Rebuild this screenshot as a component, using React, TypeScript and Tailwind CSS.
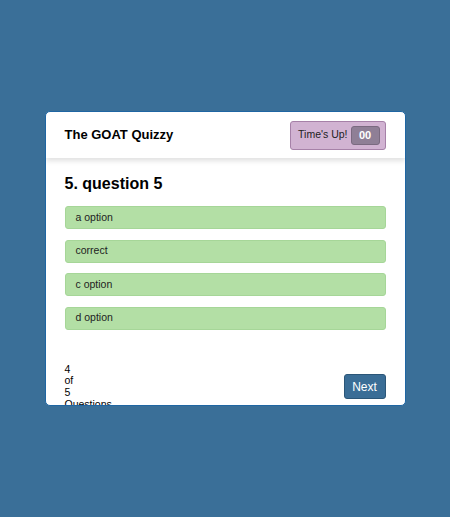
import React from "react";

export default function App() {
  const options = ["a option", "correct", "c option", "d option"];
  return (
    <div
      className="min-h-screen w-full bg-[#3a6f98] flex items-center justify-center"
      style={{ fontFamily: '"Liberation Sans", Arial, sans-serif' }}
    >
      <div className="w-[361px] h-[295px] bg-white border border-[#1f66a3] rounded-[5px] overflow-hidden flex flex-col">
        <div className="h-[46px] shrink-0 flex items-center justify-between pl-[19px] pr-[19px] shadow-[0_3px_5px_rgba(0,0,0,0.12)] relative z-10">
          <div className="text-[13px] font-bold text-black">The GOAT Quizzy</div>
          <div className="h-[29px] flex items-center gap-[3px] pl-[7px] pr-[5px] bg-[#d1b3d2] border border-[#a681a8] rounded-[3px]">
            <span className="text-[10.5px] text-[#222]">Time's Up!</span>
            <span className="h-[19px] w-[29px] flex items-center justify-center bg-[#8f7f96] border border-[#7a6a80] rounded-[3px] text-white font-bold text-[11px]">
              00
            </span>
          </div>
        </div>
        <div className="flex-1 flex flex-col px-[19px] pt-[17px]">
          <h2 className="text-[16px] font-bold text-black leading-[18px]">5. question 5</h2>
          <div className="flex flex-col gap-[10.5px] mt-[13px]">
            {options.map((o) => (
              <div
                key={o}
                className="h-[23px] flex items-center pl-[10px] bg-[#b3dfa5] border border-[#a6d698] rounded-[3px] text-[10.5px] text-[#222]"
              >
                {o}
              </div>
            ))}
          </div>
          <div className="flex items-center justify-between mt-[34px]">
            <div className="w-0 text-[10.5px] leading-[11.7px] text-black">4 of 5 Questions</div>
            <button className="h-[25px] w-[42px] flex items-center justify-center bg-[#3a6d96] border border-[#2b5678] rounded-[3px] text-white text-[12px]">
              Next
            </button>
          </div>
        </div>
      </div>
    </div>
  );
}
